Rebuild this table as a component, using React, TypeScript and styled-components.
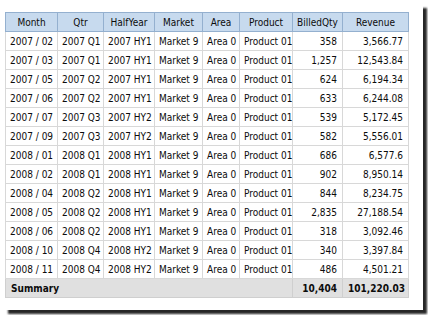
import React from "react";
import styled, { createGlobalStyle } from "styled-components";

const GlobalStyle = createGlobalStyle`
  html, body {
    margin: 0;
    padding: 0;
    background: #ffffff;
  }
`;

const Page = styled.div`
  width: 428px;
  height: 315px;
  background: #ffffff;
  overflow: hidden;
`;

const Frame = styled.div`
  width: 423px;
  height: 310px;
  box-sizing: border-box;
  padding: 12px 0 0 5px;
  background: #ffffff;
  box-shadow: 6px 6px 2px -2px rgba(0, 0, 0, 0.85);
`;

const Table = styled.table`
  border-collapse: collapse;
  table-layout: fixed;
  width: 403px;
  font-family: "DejaVu Sans Condensed", "DejaVu Sans", sans-serif;
  font-size: 10px;
  color: #0c0c0c;
`;

const Th = styled.th`
  height: 18px;
  padding: 0 4px;
  background: #c7daee;
  border: 1px solid #94b0cf;
  font-weight: normal;
  text-align: center;
  white-space: nowrap;
`;

const Td = styled.td<{ $num?: boolean }>`
  height: 18px;
  padding: 0 ${({ $num }) => ($num ? "5px" : "4px")};
  border: 1px solid #d8d8d8;
  text-align: ${({ $num }) => ($num ? "right" : "center")};
  white-space: nowrap;
`;

const SumTd = styled.td<{ $num?: boolean }>`
  height: 18px;
  padding: 0 5px;
  background: #e0e0e0;
  border: 1px solid #cfcfcf;
  font-weight: bold;
  text-align: ${({ $num }) => ($num ? "right" : "left")};
  white-space: nowrap;
`;

const widths = [52, 46, 51, 48, 37, 53, 50, 66];
const headers = ["Month", "Qtr", "HalfYear", "Market", "Area", "Product", "BilledQty", "Revenue"];

const rows: [string, string, string, string, string][] = [
  ["2007 / 02", "2007 Q1", "2007 HY1", "358", "3,566.77"],
  ["2007 / 03", "2007 Q1", "2007 HY1", "1,257", "12,543.84"],
  ["2007 / 05", "2007 Q2", "2007 HY1", "624", "6,194.34"],
  ["2007 / 06", "2007 Q2", "2007 HY1", "633", "6,244.08"],
  ["2007 / 07", "2007 Q3", "2007 HY2", "539", "5,172.45"],
  ["2007 / 09", "2007 Q3", "2007 HY2", "582", "5,556.01"],
  ["2008 / 01", "2008 Q1", "2008 HY1", "686", "6,577.6"],
  ["2008 / 02", "2008 Q1", "2008 HY1", "902", "8,950.14"],
  ["2008 / 04", "2008 Q2", "2008 HY1", "844", "8,234.75"],
  ["2008 / 05", "2008 Q2", "2008 HY1", "2,835", "27,188.54"],
  ["2008 / 06", "2008 Q2", "2008 HY1", "318", "3,092.46"],
  ["2008 / 10", "2008 Q4", "2008 HY2", "340", "3,397.84"],
  ["2008 / 11", "2008 Q4", "2008 HY2", "486", "4,501.21"],
];

const App = () => {
  return (
    <Page>
      <GlobalStyle />
      <Frame>
        <Table>
          <colgroup>
            {widths.map((w, i) => (
              <col key={i} style={{ width: w }} />
            ))}
          </colgroup>
          <thead>
            <tr>
              {headers.map((h) => (
                <Th key={h}>{h}</Th>
              ))}
            </tr>
          </thead>
          <tbody>
            {rows.map(([month, qtr, half, qty, rev]) => (
              <tr key={month}>
                <Td>{month}</Td>
                <Td>{qtr}</Td>
                <Td>{half}</Td>
                <Td>Market 9</Td>
                <Td>Area 0</Td>
                <Td>Product 01</Td>
                <Td $num>{qty}</Td>
                <Td $num>{rev}</Td>
              </tr>
            ))}
            <tr>
              <SumTd colSpan={6}>Summary</SumTd>
              <SumTd $num>10,404</SumTd>
              <SumTd $num>101,220.03</SumTd>
            </tr>
          </tbody>
        </Table>
      </Frame>
    </Page>
  );
};

export default App;
